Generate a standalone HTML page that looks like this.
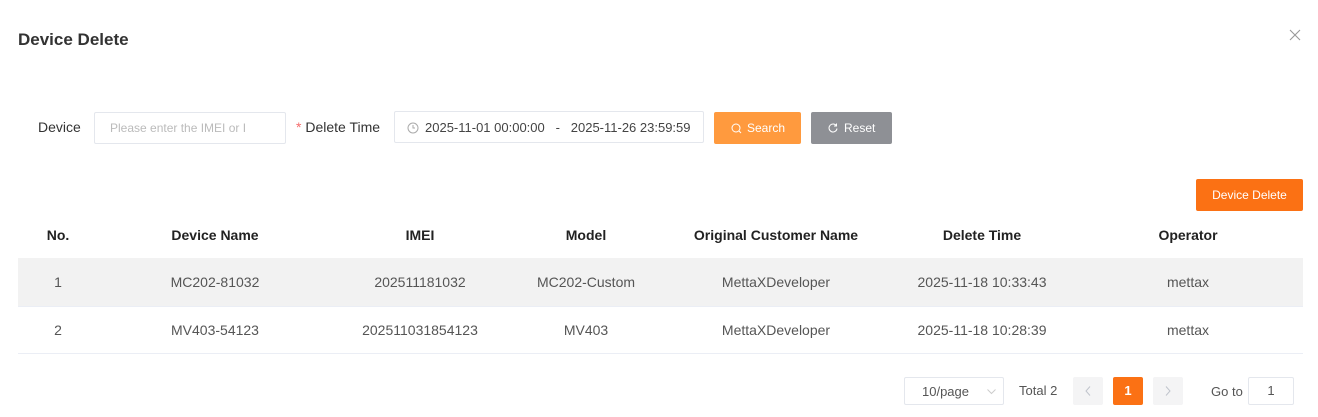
<!DOCTYPE html>
<html><head><style>
*{box-sizing:border-box;margin:0;padding:0}
body{width:1318px;height:417px;background:#fff;font-family:"Liberation Sans",sans-serif;color:#333;position:relative;overflow:hidden;font-size:13px}
.a{position:absolute}
.inp{border:1px solid #e4e7ed;border-radius:2px;background:#fff}
.th{position:absolute;top:227px;font-weight:bold;font-size:14px;color:#222;text-align:center}
.td{position:absolute;text-align:center;font-size:14px;color:#555}
</style></head><body>
<div class="a" style="left:18px;top:30px;font-size:17px;font-weight:bold;color:#333">Device Delete</div>
<svg class="a" style="left:1289px;top:29px" width="12" height="12" viewBox="0 0 12 12"><path d="M1 1L11 11M11 1L1 11" stroke="#999" stroke-width="1.1"/></svg>

<div class="a" style="left:38px;top:119px;font-size:14px">Device</div>
<div class="a inp" style="left:94px;top:112px;width:192px;height:32px"><span class="a" style="left:15px;top:8px;color:#bbb;font-size:12px">Please enter the IMEI or I</span></div>
<div class="a" style="left:296px;top:119px;font-size:14px"><span style="color:#f56c6c">*</span> Delete Time</div>
<div class="a inp" style="left:394px;top:111px;width:310px;height:32px">
<svg class="a" style="left:12px;top:10px" width="12" height="12" viewBox="0 0 12 12"><circle cx="6" cy="6" r="5" fill="none" stroke="#aaa"/><path d="M6 3v3h2" fill="none" stroke="#aaa"/></svg>
<span class="a" style="left:30px;top:8px;color:#444;font-size:13px;white-space:pre">2025-11-01 00:00:00   -   2025-11-26 23:59:59</span></div>
<div class="a" style="left:714px;top:112px;width:87px;height:32px;background:#ff9a3e;border-radius:2px;color:#fff;font-size:12px;line-height:32px">
<svg class="a" style="left:17px;top:11px" width="11" height="11" viewBox="0 0 11 11"><circle cx="5" cy="5" r="4" fill="none" stroke="#fff"/><path d="M8 8l2 2" stroke="#fff"/></svg><span class="a" style="left:33px">Search</span></div>
<div class="a" style="left:811px;top:112px;width:81px;height:32px;background:#8e9095;border-radius:2px;color:#fff;font-size:12px;line-height:32px">
<svg class="a" style="left:17px;top:11px" width="10" height="10" viewBox="0 0 10 10"><path d="M8.5 3A4 4 0 1 0 9 5.5M8.5 0.5V3H6" fill="none" stroke="#fff"/></svg><span class="a" style="left:33px">Reset</span></div>

<div class="a" style="left:1196px;top:179px;width:107px;height:32px;background:#fb7114;border-radius:2px;color:#fff;font-size:12px;text-align:center;line-height:32px">Device Delete</div>

<div class="th" style="left:18px;width:80px">No.</div>
<div class="th" style="left:115px;width:200px">Device Name</div>
<div class="th" style="left:320px;width:200px">IMEI</div>
<div class="th" style="left:486px;width:200px">Model</div>
<div class="th" style="left:666px;width:220px">Original Customer Name</div>
<div class="th" style="left:882px;width:200px">Delete Time</div>
<div class="th" style="left:1088px;width:200px">Operator</div>
<div class="a" style="left:18px;top:258px;width:1285px;height:48px;background:#f2f2f2"></div>
<div class="a" style="left:18px;top:306px;width:1285px;height:1px;background:#ebeef5"></div>
<div class="a" style="left:18px;top:353px;width:1285px;height:1px;background:#ebeef5"></div>

<div class="td" style="top:274px;left:18px;width:80px">1</div>
<div class="td" style="top:274px;left:115px;width:200px">MC202-81032</div>
<div class="td" style="top:274px;left:320px;width:200px">202511181032</div>
<div class="td" style="top:274px;left:486px;width:200px">MC202-Custom</div>
<div class="td" style="top:274px;left:666px;width:220px">MettaXDeveloper</div>
<div class="td" style="top:274px;left:882px;width:200px">2025-11-18 10:33:43</div>
<div class="td" style="top:274px;left:1088px;width:200px">mettax</div>
<div class="td" style="top:322px;left:18px;width:80px">2</div>
<div class="td" style="top:322px;left:115px;width:200px">MV403-54123</div>
<div class="td" style="top:322px;left:320px;width:200px">202511031854123</div>
<div class="td" style="top:322px;left:486px;width:200px">MV403</div>
<div class="td" style="top:322px;left:666px;width:220px">MettaXDeveloper</div>
<div class="td" style="top:322px;left:882px;width:200px">2025-11-18 10:28:39</div>
<div class="td" style="top:322px;left:1088px;width:200px">mettax</div>

<div class="a inp" style="left:904px;top:377px;width:100px;height:28px"><span class="a" style="left:17px;top:6px;color:#555">10/page</span>
<svg class="a" style="left:82px;top:11px" width="9" height="6" viewBox="0 0 9 6"><path d="M0.5 0.5L4.5 4.5L8.5 0.5" fill="none" stroke="#ccc"/></svg></div>
<div class="a" style="left:1019px;top:383px;color:#555">Total 2</div>
<div class="a" style="left:1073px;top:377px;width:30px;height:28px;background:#f4f4f5;border-radius:2px"><svg class="a" style="left:12px;top:9px" width="6" height="10" viewBox="0 0 6 10"><path d="M5 0.5L1 5L5 9.5" fill="none" stroke="#c0c4cc"/></svg></div>
<div class="a" style="left:1113px;top:377px;width:30px;height:28px;background:#fb7114;border-radius:2px;color:#fff;font-weight:bold;text-align:center;line-height:28px">1</div>
<div class="a" style="left:1153px;top:377px;width:30px;height:28px;background:#f4f4f5;border-radius:2px"><svg class="a" style="left:12px;top:9px" width="6" height="10" viewBox="0 0 6 10"><path d="M1 0.5L5 5L1 9.5" fill="none" stroke="#c0c4cc"/></svg></div>
<div class="a" style="left:1211px;top:384px;color:#555">Go to</div>
<div class="a inp" style="left:1248px;top:377px;width:46px;height:28px;text-align:center;line-height:26px;color:#555">1</div>
</body></html>
